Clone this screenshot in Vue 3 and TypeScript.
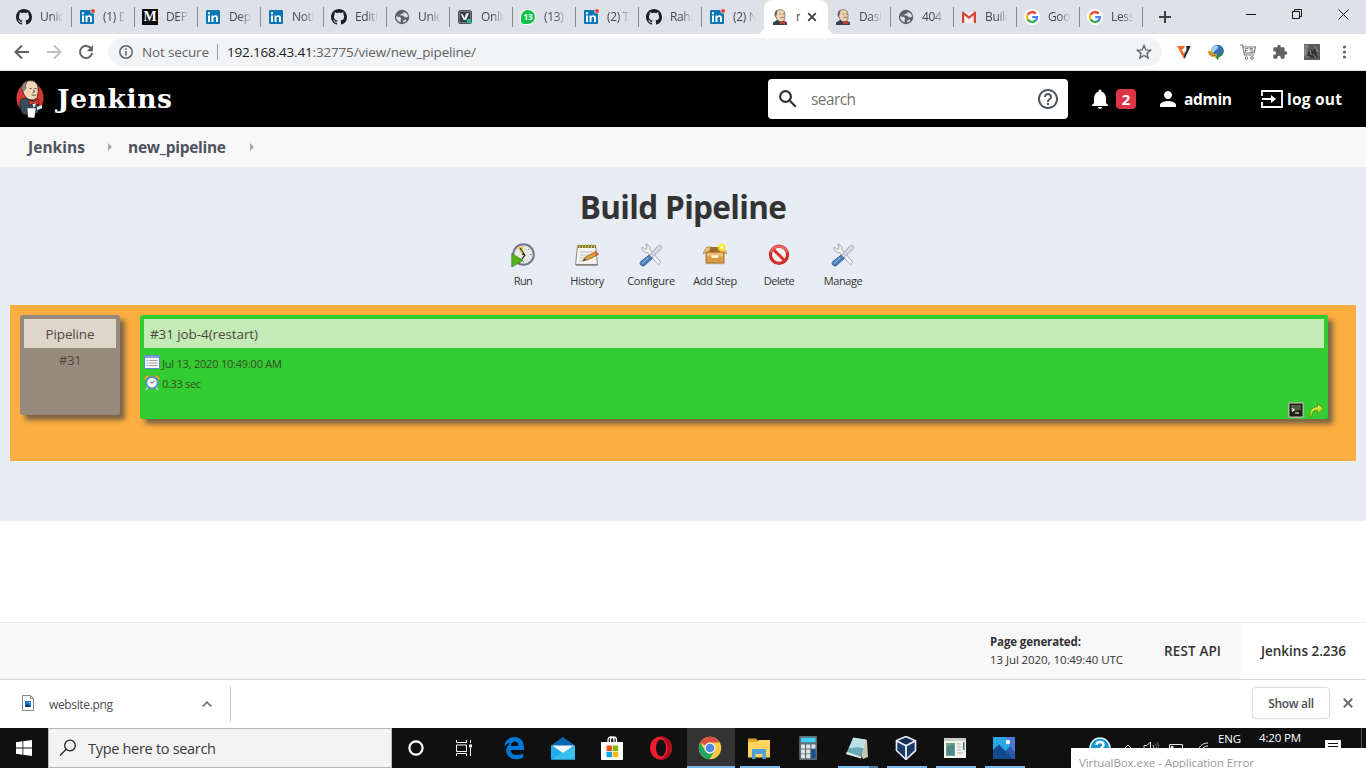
<script setup lang="ts">
import type { Directive } from 'vue'

interface Tab { icon: string; title: string; active?: boolean; plain?: boolean }
interface Action { icon: string; label: string; width: number }
interface TaskApp { icon: string; running?: boolean; focused?: boolean; stacked?: boolean }

const tabs: Tab[] = [
  { icon: 'github', title: 'Unico' },
  { icon: 'linkedin-dot', title: '(1) De' },
  { icon: 'medium', title: 'DEPL' },
  { icon: 'linkedin', title: 'Deplo' },
  { icon: 'linkedin', title: 'Notifi' },
  { icon: 'github', title: 'Editin' },
  { icon: 'globe', title: 'Unico' },
  { icon: 'onlinetool', title: 'Onlin' },
  { icon: 'whatsapp', title: '(13)' },
  { icon: 'linkedin-dot', title: '(2) Ta' },
  { icon: 'github', title: 'Rahul' },
  { icon: 'linkedin-dot', title: '(2) Ne', plain: true },
  { icon: 'butler-head', title: 'n', active: true },
  { icon: 'butler-head', title: 'Dashb' },
  { icon: 'globe', title: '404' },
  { icon: 'gmail', title: 'Build' },
  { icon: 'google', title: 'Goog' },
  { icon: 'google', title: 'Less' },
]

const actions: Action[] = [
  { icon: 'run', label: 'Run', width: 19 },
  { icon: 'history', label: 'History', width: 34 },
  { icon: 'tools', label: 'Configure', width: 48 },
  { icon: 'package', label: 'Add Step', width: 44 },
  { icon: 'forbid', label: 'Delete', width: 31 },
  { icon: 'tools', label: 'Manage', width: 39 },
]

const apps: TaskApp[] = [
  { icon: 'edge' },
  { icon: 'mail' },
  { icon: 'store' },
  { icon: 'opera' },
  { icon: 'chrome', running: true, focused: true },
  { icon: 'explorer', running: true },
  { icon: 'calc' },
  { icon: 'notepad', running: true, stacked: true },
  { icon: 'vbox', running: true },
  { icon: 'window', running: true },
  { icon: 'photos', running: true },
]

// Spreads the letters of a label so that it takes up the given width.
const vFit: Directive<HTMLElement, number> = {
  mounted(el, { value }) {
    const count = (el.textContent ?? '').trim().length
    const range = document.createRange()
    range.selectNodeContents(el)
    const natural = range.getBoundingClientRect().width
    if (count > 1) el.style.letterSpacing = `${(value - natural) / (count - 1)}px`
  },
}
</script>

<template>
  <svg class="defs" aria-hidden="true">
    <symbol id="github" viewBox="0 0 16 16">
      <path fill="#1b1f23" d="M8 0C3.58 0 0 3.58 0 8c0 3.54 2.29 6.53 5.47 7.59.4.07.55-.17.55-.38 0-.19-.01-.82-.01-1.49-2.01.37-2.53-.49-2.69-.94-.09-.23-.48-.94-.82-1.13-.28-.15-.68-.52-.01-.53.63-.01 1.08.58 1.23.82.72 1.21 1.87.87 2.33.66.07-.52.28-.87.51-1.07-1.78-.2-3.64-.89-3.64-3.95 0-.87.31-1.59.82-2.15-.08-.2-.36-1.02.08-2.12 0 0 .67-.21 2.2.82.64-.18 1.32-.27 2-.27s1.36.09 2 .27c1.53-1.04 2.2-.82 2.2-.82.44 1.1.16 1.92.08 2.12.51.56.82 1.27.82 2.15 0 3.07-1.87 3.75-3.65 3.95.29.25.54.73.54 1.48 0 1.07-.01 1.93-.01 2.2 0 .21.15.46.55.38A8 8 0 0 0 16 8c0-4.42-3.58-8-8-8z" />
    </symbol>
    <symbol id="linkedin" viewBox="0 0 16 16">
      <rect x="1" y="1" width="14" height="14" rx="1" fill="#0a76b5" />
      <path fill="#fff" d="M3 6.4h2V13H3zM3 3.2h2v2H3zM6.5 6.4h1.9v.9c.9-1.4 4.6-1.6 4.6 1.6V13h-2V9.4c0-1.9-2.5-1.7-2.5 0V13h-2z" />
    </symbol>
    <symbol id="linkedin-dot" viewBox="0 0 16 16">
      <use href="#linkedin" />
      <circle cx="14" cy="2" r="2.6" fill="#dee1e6" /><circle cx="14" cy="2" r="2" fill="#f44336" />
    </symbol>
    <symbol id="globe" viewBox="0 0 16 16">
      <circle cx="8" cy="8" r="7.2" fill="#5f6368" />
      <path fill="#dee1e6" d="M2.2 7.2l3.400.9 1.700 1.500-.7 1.600v2C4 12.800 2 10.500 2.200 7.200zM9.800 3.200L8.800 4.600l-2 .6-.6 1.200 3.200.2 1.300 1.600 2 .3 1.400-1.300C13.700 5.200 12.300 3.700 9.800 3.200z" />
      <path fill="#dee1e6" d="M9 12l2-1.500 1.500.2C11.600 12.500 10.500 13.200 9.300 13.600z" />
    </symbol>
    <symbol id="onlinetool" viewBox="0 0 16 16">
      <rect x="1" y="1" width="14" height="14" rx="3" fill="#343d47" />
      <rect x="2.200" y="2.200" width="11.600" height="11.600" rx="2" fill="none" stroke="#9aa3aa" stroke-width=".8" />
      <path d="M3.500 4.500l2.500 1 1.500 3.500 1.500-4.500 3-.5-2.800 7H6.500z" fill="#e9edef" />
      <circle cx="12" cy="12" r="2.300" fill="#1dbf9c" />
    </symbol>
    <symbol id="butler-head" viewBox="0 0 16 16">
      <path fill="#33414d" d="M1 16v-2.500L5 11h6l4 2.500V16z" />
      <path fill="#efd2ae" stroke="#5a5047" stroke-width=".7" d="M3.500 3C5 .3 10.500-.2 12.300 2.700c1 1.800.8 5.800.3 7.800-1 2.500-4.600 3-6.600 1C4 9.500 3 6 3.500 3z" />
      <path d="M2.700 7.500C2 4 3.500 1.500 5.500.9L5 4.500l-1 3.200z" fill="#6e6760" />
      <path d="M7.500 5h1.300M10.800 5h1.300M8.500 8.700c1-.6 2.500-.5 3.300.1" stroke="#5d4c3e" stroke-width=".8" fill="none" />
      <path fill="#d33833" d="M8 12.300l2.500 1 2.800-1v3.400L10.500 14.600 8 15.700z" />
    </symbol>
    <symbol id="gmail" viewBox="0 0 16 16">
      <path fill="#f1f1f1" d="M1 3h14v11H1z" />
      <path fill="#d5433a" d="M1 14V3.200C1 2.600 1.800 2.300 2.400 2.800L8 7.300l5.600-4.500c.6-.5 1.400-.2 1.400.4V14h-2.200V6.200L8 10 3.200 6.200V14z" />
    </symbol>
    <symbol id="google" viewBox="0 0 16 16">
      <circle cx="8" cy="8" r="8" fill="#fff" />
      <g fill="none" stroke-width="2.300">
        <path stroke="#ea4335" d="M11.700 4.600A5 5 0 0 0 3.600 5.700" />
        <path stroke="#fbbc05" d="M3.600 5.600a5 5 0 0 0 0 4.800" />
        <path stroke="#34a853" d="M3.600 10.300a5 5 0 0 0 7.800 1.400" />
        <path stroke="#4285f4" d="M11.300 11.800A5 5 0 0 0 13 8.200H8.200" />
      </g>
    </symbol>

    <symbol id="run" viewBox="0 0 24 24">
      <circle cx="12.500" cy="11.500" r="10.300" fill="#e9e9e4" stroke="#76758f" stroke-width="2" />
      <path d="M11.500 12L6.500 4.500a10 10 0 0 1 5.800-1.500z" fill="#e9cb53" />
      <path d="M9 5l5 7.200-3.500 4.500M14 12l-3-1" stroke="#222" stroke-width="1.100" fill="none" />
      <path d="M20.500 11.500h-1.500M12.500 19.500v-1.300M18 5.800l-1 1" stroke="#7b7b83" stroke-width="1" />
      <path d="M.8 10.500L11.800 17.500.8 24z" fill="#55b31d" stroke="#388611" stroke-width=".8" />
    </symbol>
    <symbol id="history" viewBox="0 0 24 24">
      <path d="M2.500 2.500h18l2 19.500h-22z" fill="#f4f4f0" stroke="#8b8b86" />
      <path d="M1 21.700h21.500" stroke="#7f7f7a" stroke-width="1.500" />
      <path d="M3 2h18v3H3z" fill="#8d7f37" /><path d="M4.500 1v4M7.500 1v4M10.500 1v4M13.500 1v4M16.500 1v4M19.500 1v4" stroke="#c8bb62" stroke-width="1" />
      <path d="M5 9h13M5 12h9M4.500 15h6M4 18h5" stroke="#bdbdb8" stroke-width="1" />
      <path d="M21 8.500l2.500 3-11 5.500-4.500.5 2.500-3.500z" fill="#dc9c3c" stroke="#805a24" stroke-width=".7" />
      <path d="M21 8l2.800 3.200-2 1-2.300-3z" fill="#dd5947" /><path d="M7.500 17.700l2.400-2 1 1.600z" fill="#322b22" />
    </symbol>
    <symbol id="tools" viewBox="0 0 24 24">
      <path d="M3 4.200l3.200 2 1.500-.7.3-3-2-1.200c3-.4 5.300 1.700 5 5.300l10 11.500c1.500 2-1 4-2.700 2.600L8.500 9.500C5.500 10 2.600 7.500 3 4.200z" fill="#f1f1ef" stroke="#999b9d" stroke-width=".9" />
      <path d="M18.500 3.500c1-1 2.500-1.500 3.500-.5s.3 2.500-.7 3.500L10.500 16.500l-2-1.800z" fill="#d3dbe5" stroke="#8696ab" stroke-width=".8" />
      <path d="M10 12.300l3.300 3.200-7.500 6.700c-1.500 1.200-2.900.9-3.900-.1s-1.200-2.400 0-3.700z" fill="#4d7fc0" stroke="#2c568e" stroke-width=".9" />
      <path d="M9.500 14.500l-6.500 6" stroke="#a9c8ed" stroke-width="1" />
    </symbol>
    <symbol id="package" viewBox="0 0 24 24">
      <path d="M2 20h20l1 1.500H2z" fill="#cfccc4" />
      <path d="M3 9h18v11H3z" fill="#dc9b47" stroke="#98631e" stroke-width=".8" />
      <path d="M4 10h16v3.500H4z" fill="#eebf78" /><path d="M3 9l3-5h12l3 5z" fill="#9a6b2c" />
      <path d="M3 9l-2 2-1-1 4-6h4L6 9zM21 9l2 2 1-1-4-5h-3l1 4z" fill="#f0c179" stroke="#a87128" stroke-width=".7" />
      <rect x="8.500" y="12" width="7" height="3" rx="1.500" fill="#fff3d1" />
      <circle cx="18.700" cy="4.500" r="4" fill="#ffe81b" opacity=".85" /><circle cx="18.700" cy="4.500" r="1.700" fill="#fffcb6" />
    </symbol>
    <symbol id="forbid" viewBox="0 0 24 24">
      <circle cx="12" cy="11.800" r="8.600" fill="#f1eeee" stroke="#cf2c2c" stroke-width="3.200" />
      <path d="M6 6l12 12" stroke="#d53030" stroke-width="3" /><path d="M3.900 9a8.700 8.700 0 0 1 16.200 0" fill="none" stroke="#ec6c69" stroke-width="2.200" />
    </symbol>
    <symbol id="report" viewBox="0 0 16 16">
      <rect x=".5" y=".5" width="15" height="13" rx="1" fill="#f5f8fc" stroke="#5d86c4" />
      <path d="M1 1h14v2H1z" fill="#7ba2de" />
      <path d="M2.500 5.500h1.300M2.500 8h1.300M2.500 10.500h1.300" stroke="#32a4cc" stroke-width="1.200" />
      <path d="M5 5.500h8.500M5 8h8.500M5 10.500h8.500" stroke="#a69b92" stroke-width="1" />
    </symbol>
    <symbol id="alarm" viewBox="0 0 16 16">
      <path d="M4 12l-2 3M12 12l2 3" stroke="#bcc6c7" stroke-width="2" />
      <path d="M.5 4.700C0 1.500 3 0 5.700.8zM15.500 4.700C16 1.500 13 0 10.300.8z" fill="#f4bd3c" stroke="#ba8520" stroke-width=".6" />
      <circle cx="8" cy="7.700" r="5.700" fill="#f3f8fb" stroke="#5b91c2" stroke-width="1.800" />
      <path d="M8 8.300l2.500-2.500M8 8.300L6.500 6.500" stroke="#555" fill="none" stroke-width="1" />
    </symbol>
    <symbol id="console" viewBox="0 0 16 16">
      <rect x=".7" y=".7" width="14.600" height="14.600" rx="1.500" fill="#383b24" stroke="#b2b1a1" stroke-width="1.400" />
      <rect x="2" y="2" width="12" height="12" fill="#1d2114" /><path d="M3 3h10v5L3 9z" fill="#565a3a" />
      <path d="M4 6.300l2.200 1.700L4 9.500M7 11h4" stroke="#fff" fill="none" stroke-width="1.100" />
    </symbol>
    <symbol id="redo" viewBox="0 0 16 16">
      <path d="M1.200 14.500C0 9 2.500 5 8.500 4.900V1.500L14.500 6.700 8.500 12V8.500C4.500 8 2.500 10.500 3 14.500z" fill="#b5d92d" stroke="#5f9713" stroke-width=".9" />
      <path d="M2.300 10C3.500 7 6 6 9.500 6V4l3 2.700" fill="none" stroke="#e6ef5a" stroke-width=".8" />
    </symbol>

    <symbol id="edge" viewBox="0 0 24 24">
      <path fill="#0078d7" d="M2 11C3 4 7.500 1 12.500 1 19 1 22.500 6 22 14H8.500c.2 4 4 5.300 7 5 2.200-.1 4-.8 5.700-1.800v4.300C15 25 4.500 23.500 4.200 14.500c0-3.500 2-6.300 4.500-7.500C5.600 7 3.300 8.900 2 11zM8.700 10h7.600c.2-3.500-1.600-4.500-3.500-4.500S9 7 8.700 10z" />
    </symbol>
    <symbol id="mail" viewBox="0 0 24 24">
      <path fill="#0867b2" d="M0 9.500L12 1l12 8.500V14H0z" /><path fill="#22adeb" d="M0 9.500L24 22v1.500H0z" />
      <path fill="#39c0f2" d="M24 9.500L0 23.500h24z" /><path fill="#f4fafd" d="M1 9.500h22L12 17z" />
    </symbol>
    <symbol id="store" viewBox="0 0 24 24">
      <path fill="none" stroke="#fff" stroke-width="1.300" d="M8 7V4c0-4 6-4 6 0v3M10.500 6V4c0-4 6-4 6 0v3" />
      <path fill="#fff" d="M1 6h22v17a1 1 0 0 1-1 1H2a1 1 0 0 1-1-1z" />
      <path fill="#f25022" d="M6.500 9.500H12V15H6.500z" /><path fill="#7fba00" d="M12.700 9.500h5.500V15h-5.500z" />
      <path fill="#00a4ef" d="M6.500 15.700H12v5.500H6.500z" /><path fill="#ffb900" d="M12.700 15.700h5.500v5.500h-5.500z" />
    </symbol>
    <symbol id="opera" viewBox="0 0 24 24">
      <ellipse cx="12" cy="12" rx="11" ry="11.500" fill="#ed1c2e" />
      <path d="M12 .5a11 11.500 0 0 1 0 23c5-3 7-8 6.500-12S16 3 12 .5z" fill="#ae0d22" />
      <ellipse cx="12" cy="12" rx="5" ry="8.500" fill="#111" />
    </symbol>
    <symbol id="chrome" viewBox="0 0 24 24">
      <circle cx="12" cy="12" r="11.200" fill="#ffcd41" />
      <path d="M2.300 6.400A11.200 11.200 0 0 1 21.700 6.400H12a5.600 5.600 0 0 0-5 3z" fill="#dc4f40" />
      <path d="M2.300 6.400a11.200 11.200 0 0 0 9 16.800L16.800 15 12 17.600a5.600 5.600 0 0 1-4.900-2.800z" fill="#20a566" />
      <circle cx="12" cy="12" r="5.500" fill="#f3f3f3" /><circle cx="12" cy="12" r="4.300" fill="#4b89ed" />
    </symbol>
    <symbol id="explorer" viewBox="0 0 24 24">
      <path d="M1 2.500h8l1.500 2H23V21H1z" fill="#dda52a" /><path d="M1 6h9l2-2h11v17.500H1z" fill="#ffd35d" />
      <path d="M5 23v-9a1 1 0 0 1 1-1h12a1 1 0 0 1 1 1v9h-3.500v-5h-7v5z" fill="#4aa1db" />
    </symbol>
    <symbol id="calc" viewBox="0 0 24 24">
      <rect x="3.200" width="17.800" height="24" rx="1" fill="#606d78" /><path d="M5 1.700h14.500v4.600H5z" fill="#3cd2f4" />
      <g fill="#dde3e8"><path d="M5 8.500h4v4H5zM10.200 8.500h4v4h-4zM15.400 8.500h4v4h-4zM5 13.400h4v4H5zM10.200 13.400h4v4h-4zM5 18.300h4v4H5zM10.200 18.300h4v4h-4z" /></g>
      <path d="M15.400 13.400h4v9h-4z" fill="#154f93" />
    </symbol>
    <symbol id="notepad" viewBox="0 0 24 24">
      <path d="M9 3l13 1 1 17-5 2z" fill="#c9c7b1" /><path d="M8 2l13 2-5 18L1 18z" fill="#69a9b4" />
      <path d="M8.200 2L21 4l-2.200 8.500C13 10 9 12 4 12z" fill="#bbe3e5" /><path d="M8 2l13 2" stroke="#d9e4e2" stroke-width="1.200" />
      <path d="M1 18l15 4.500.5-1.500-14.500-5z" fill="#e9f0ec" />
    </symbol>
    <symbol id="vbox" viewBox="0 0 24 24">
      <path d="M12 .5l9.500 4.200v10L12 23.500l-9.500-9v-10z" fill="#1c3a66" stroke="#dde6f2" stroke-width="1.700" />
      <path d="M3 5l9 4.700L21 5M12 9.700V22" stroke="#eef3fa" stroke-width="1.800" fill="none" />
      <path d="M5.500 5L12 2l6.500 3L12 8z" fill="#162c50" />
    </symbol>
    <symbol id="window" viewBox="0 0 24 24">
      <path d="M1 2h22v20H1z" fill="#f3f3f0" /><path d="M1 2h22v3H1z" fill="#c9cbca" />
      <path d="M3 7h9v13H3z" fill="#6f9f85" /><path d="M4 11l7-3v11H4z" fill="#4b878f" />
      <path d="M14 8h4M14 11h4M14 14h4M14 17h6" stroke="#c7c7c2" stroke-width="1.500" /><path d="M20 6h1.500v8H20z" fill="#297a61" />
    </symbol>
    <symbol id="photos" viewBox="0 0 24 24">
      <path d="M1 1h22v22H1z" fill="#2aa7e9" /><path d="M14 1h9v21z" fill="#4b78d8" />
      <path d="M12 17l6-7 5 6v7H12z" fill="#2c59ac" /><path d="M1 14l6-5.500L21 23H1z" fill="#104a89" />
      <circle cx="16" cy="6" r="2.200" fill="#f4f8fc" />
    </symbol>
  </svg>

  <div class="screen">
    <div class="tabstrip">
      <div v-for="(tab, i) in tabs" :key="i" class="tab" :class="{ active: tab.active, plain: tab.plain || tab.active }">
        <span v-if="tab.icon === 'medium'" class="favicon medium">M</span>
        <span v-else-if="tab.icon === 'whatsapp'" class="favicon whatsapp">13</span>
        <svg v-else class="favicon"><use :href="'#' + tab.icon" /></svg>
        <span class="tab-title">{{ tab.title }}</span>
        <svg v-if="tab.active" class="tab-close" viewBox="0 0 10 10"><path d="M1.200 1.200l7.600 7.600M8.800 1.200L1.200 8.800" /></svg>
      </div>
      <svg class="new-tab" viewBox="0 0 12 12"><path d="M6 0v12M0 6h12" /></svg>
      <div class="controls">
        <svg viewBox="0 0 11 11"><path d="M0 5.500h10" /></svg>
        <svg viewBox="0 0 11 11"><path d="M.5 2.500h7v7h-7zM2.500 2.500v-2h7v7h-2" /></svg>
        <svg viewBox="0 0 11 11"><path d="M.5.5l10 10M10.500.5l-10 10" /></svg>
      </div>
    </div>

    <div class="toolbar">
      <svg class="nav" viewBox="0 0 16 16"><path d="M15 8H2M8 1.500L1.500 8 8 14.500" /></svg>
      <svg class="nav dim" viewBox="0 0 16 16"><path d="M1 8h13M8 1.500L14.500 8 8 14.500" /></svg>
      <svg class="nav" viewBox="0 0 16 16"><path d="M13.300 4.800A6.100 6.100 0 1 0 14.100 9" /><path class="solid" d="M14.900 1v6.200H8.800z" /></svg>
      <div class="omnibox">
        <svg class="info" viewBox="0 0 14 14"><circle cx="7" cy="7" r="6.200" /><path d="M7 6v4.500M7 3.300v1.600" /></svg>
        <span v-fit="67" class="insecure">Not secure</span>
        <span class="bar" />
        <span v-fit="249" class="url"><b>192.168.43.41</b>:32775/view/new_pipeline/</span>
        <svg class="star" viewBox="0 0 16 16"><path d="M8 1.600l1.800 4.300 4.700.4L11 9.400l1.100 4.600L8 11.500 3.900 14 5 9.400 1.500 6.300l4.700-.4z" /></svg>
      </div>
      <div class="extensions">
        <svg viewBox="0 0 16 16"><path d="M1 2h8L7.500 5H5.700l2 4.500L9 7l1 4.500L8 15z" fill="#f46b28" /><path d="M10.200 2h4.500L8.500 15 8 12l2.500-6z" fill="#18233d" /></svg>
        <svg viewBox="0 0 16 16"><circle cx="9.500" cy="7" r="6.300" fill="#3a6fbc" /><path d="M5 3c3-3 6-1 5 1s-3 2-4 4-3 0-3-2z" fill="#a6cfef" /><path d="M0 8l6 1 3 3 7-5-2 4-3 .5L10 16l-3-3c-4 0-6-2-7-5z" fill="#278e24" /><path d="M0 7c2-1.500 4 0 5 2.500l4 1-1 2.500C3 13.500.5 11 0 7z" fill="#e9b42c" /><path d="M1.500 8c1.500 3 3 3.500 6 3.500" stroke="#b5442c" fill="none" /></svg>
        <svg viewBox="0 0 16 16"><path d="M0 1h2.500l2 10H14M3 3h12.500l-1.300 6H4.500" fill="none" stroke="#777" stroke-width="1.100" /><path d="M5.500 4.500h3m-3 0v4m0-2h2M13 4.500h-3v1.500h3v2h-3" fill="none" stroke="#777" stroke-width=".9" /><circle cx="6.500" cy="14" r="1.300" fill="none" stroke="#777" /><circle cx="12" cy="14" r="1.300" fill="none" stroke="#777" /></svg>
        <svg viewBox="0 0 24 24"><path fill="#5f6368" d="M20.500 11H19V7c0-1.100-.9-2-2-2h-4V3.500a2.500 2.500 0 0 0-5 0V5H4c-1.100 0-2 .9-2 2v3.800h1.500a2.700 2.700 0 0 1 0 5.400H2V20c0 1.100.9 2 2 2h3.800v-1.500a2.700 2.700 0 0 1 5.400 0V22H17c1.100 0 2-.9 2-2v-4h1.500a2.500 2.500 0 0 0 0-5z" /></svg>
        <svg viewBox="0 0 16 16"><path d="M0 0h16v16H0z" fill="#5d5d5d" /><path d="M0 1h5l-2 5 1 3-4 4z" fill="#858585" /><path d="M4 8l2.500-3 2 2 2.500-3 3 10H3z" fill="#333" /><path d="M6 6l1 5M11 3l3 5M2 13h4M9 10l3 4" stroke="#999" /></svg>
        <svg viewBox="0 0 16 16"><g fill="#5f6368"><circle cx="8.500" cy="3" r="1.600" /><circle cx="8.500" cy="8" r="1.600" /><circle cx="8.500" cy="13" r="1.600" /></g></svg>
      </div>
    </div>

    <header class="header">
      <svg class="butler" viewBox="0 0 28 40">
        <ellipse cx="14" cy="19" rx="13.500" ry="15.500" fill="#d33833" />
        <path d="M5.500 20l6-1 8 4 4 5-1.500 6-8 2.500-7-1.500C3.500 31 3 24 5.500 20z" fill="#335061" stroke="#151515" stroke-width=".7" />
        <path d="M6.500 7C9 0 19 0 21.500 6c1 4 1 8.500-.5 12.500-2 3-7 3-9.500 1C8 17 5.500 11 6.500 7z" fill="#f0d6b7" stroke="#111" stroke-width=".7" />
        <path d="M6 12C4.500 7 7.500 3 11.500 1.800L9.500 6l.5 3-2.500 3z" fill="#8d8a86" stroke="#222" stroke-width=".5" />
        <path d="M13.500 9.500h2M18.500 9.500h2M15.500 15.700c2 1 4 .5 5-.3M17.500 10.500l1 2.500-2 .5" stroke="#3b2e25" fill="none" stroke-width=".8" />
        <path d="M12.500 20.500l5 2 5-2.500.5 6-5-1.500-5 2z" fill="#d33833" stroke="#111" stroke-width=".5" /><path d="M16.500 25l1.500 4 2-4.500z" fill="#fff" />
        <path d="M11 29h9l-1.500 10-6.500-.5z" fill="#fff" stroke="#222" stroke-width=".4" /><path d="M21 28l5-2v3.500l-5 1.500z" fill="#dfe4e6" />
      </svg>
      <span v-fit="115" class="wordmark">Jenkins</span>
      <div class="search">
        <svg class="lens" viewBox="0 0 18 18"><circle cx="6.500" cy="6.500" r="5.400" /><path d="M10.800 10.800l6 6" /></svg>
        <span v-fit="45" class="placeholder">search</span>
        <svg class="help" viewBox="0 0 24 24"><path d="M11 18h2v-2h-2v2zm1-16C6.480 2 2 6.480 2 12s4.480 10 10 10 10-4.480 10-10S17.520 2 12 2zm0 18c-4.410 0-8-3.590-8-8s3.590-8 8-8 8 3.590 8 8-3.590 8-8 8zm0-14c-2.210 0-4 1.790-4 4h2c0-1.100.9-2 2-2s2 .9 2 2c0 2-3 1.750-3 5h2c0-2.250 3-2.500 3-5 0-2.210-1.790-4-4-4z" /></svg>
      </div>
      <svg class="hicon bell" viewBox="0 0 24 24"><path d="M12 22c1.100 0 2-.9 2-2h-4c0 1.100.9 2 2 2zm6-6v-5c0-3.070-1.630-5.640-4.500-6.320V4a1.500 1.500 0 0 0-3 0v.68C7.640 5.360 6 7.920 6 11v5l-2 2v1h16v-1l-2-2z" /></svg>
      <span class="count">2</span>
      <svg class="hicon user" viewBox="0 0 24 24"><path d="M12 12c2.210 0 4-1.790 4-4s-1.790-4-4-4-4 1.790-4 4 1.790 4 4 4zm0 2c-2.670 0-8 1.340-8 4v2h16v-2c0-2.660-5.330-4-8-4z" /></svg>
      <span v-fit="48" class="hlink">admin</span>
      <svg class="exit" viewBox="0 0 22 18"><path d="M1 6V1h20v16H1v-5M1 9h11" /><path class="tip" d="M10 5l5 4-5 4z" /></svg>
      <span v-fit="55" class="hlink">log out</span>
    </header>

    <nav class="crumbs">
      <span v-fit="57" class="crumb-root">Jenkins</span><i class="arrow first" />
      <span v-fit="98" class="crumb-view">new_pipeline</span><i class="arrow" />
    </nav>

    <main class="content">
      <h1><span v-fit="207">Build Pipeline</span></h1>
      <div class="actions">
        <div v-for="action in actions" :key="action.label" class="action">
          <svg><use :href="'#' + action.icon" /></svg>
          <span v-fit="action.width">{{ action.label }}</span>
        </div>
      </div>
      <section class="pipeline">
        <div class="card revision">
          <div class="card-head"><span v-fit="49">Pipeline</span></div>
          <span v-fit="23" class="number">#31</span>
        </div>
        <div class="card build">
          <div class="card-head"><span v-fit="108">#31 job-4(restart)</span></div>
          <div class="fact"><svg><use href="#report" /></svg><span v-fit="120">Jul 13, 2020 10:49:00 AM</span></div>
          <div class="fact"><svg><use href="#alarm" /></svg><span v-fit="39">0.33 sec</span></div>
          <div class="card-tools"><svg><use href="#console" /></svg><svg><use href="#redo" /></svg></div>
        </div>
      </section>
    </main>

    <footer class="footer">
      <div class="generated"><b v-fit="91">Page generated:</b><span v-fit="133">13 Jul 2020, 10:49:40 UTC</span></div>
      <span v-fit="57" class="rest">REST API</span>
      <div class="version"><span v-fit="85">Jenkins 2.236</span></div>
    </footer>

    <div class="downloads">
      <svg class="file" viewBox="0 0 12 16"><path d="M.5.500h8l3 3v12H.5z" fill="#fff" stroke="#8a8a8a" /><path d="M8.500.500v3h3" fill="none" stroke="#8a8a8a" /><path d="M3 6h6v6H3z" fill="#1d79c9" /><path d="M3 11l2-2 4 3H3z" fill="#0d3768" /><circle cx="7.500" cy="7.500" r=".8" fill="#9ed7ff" /></svg>
      <span v-fit="64" class="filename">website.png</span>
      <svg class="caret" viewBox="0 0 10 6"><path d="M.8 5.300L5 1.200l4.200 4.100" /></svg>
      <span class="split" />
      <div class="show-all"><span v-fit="46">Show all</span></div>
      <svg class="dismiss" viewBox="0 0 10 10"><path d="M.8.8l8.400 8.400M9.200.8L.8 9.200" /></svg>
    </div>

    <div class="taskbar">
      <div class="start"><svg viewBox="0 0 16 16"><path d="M0 2.200L6.500 1.300v6.200H0zM7.300 1.200L16 0v7.500H7.300zM0 8.400h6.500v6.300L0 13.800zM7.300 8.400H16V16l-8.700-1.200z" /></svg></div>
      <div class="task-search">
        <svg viewBox="0 0 18 18"><circle cx="11" cy="6.500" r="5.300" /><path d="M7.200 10.200L1 16.500" /></svg>
        <span v-fit="128">Type here to search</span>
      </div>
      <div class="slot"><svg class="cortana" viewBox="0 0 16 16"><circle cx="8" cy="8" r="6.600" /></svg></div>
      <div class="slot"><svg class="taskview" viewBox="0 0 17 16"><path d="M.5 0v2.500h10V0M.5 5h10v6.500H.5zM.5 16v-2.500h10V16M14.500 0v3M14.500 8v8" /><path class="fill" d="M13 4.500h3v3h-3z" /></svg></div>
      <div class="apps">
        <div v-for="app in apps" :key="app.icon" class="app" :class="{ running: app.running, focused: app.focused, stacked: app.stacked }">
          <svg><use :href="'#' + app.icon" /></svg>
        </div>
      </div>
      <div class="tray">
        <svg class="ask" viewBox="0 0 22 22"><circle cx="11" cy="11" r="10" fill="#1595cf" stroke="#e5f6fc" stroke-width="1.500" /><path d="M7.500 8c0-4 7-4 7 0 0 2.500-3.500 2.500-3.500 5M11 15v2" fill="none" stroke="#fff" stroke-width="2.500" /></svg>
        <svg class="up" viewBox="0 0 10 10"><path d="M1 7l4-4 4 4" /></svg>
        <svg class="vol" viewBox="0 0 16 16"><path d="M1 5.500h3L7.500 2v12L4 10.500H1zM10 5c1 1.500 1 4.500 0 6" /><path class="faint" d="M12 3.500c2 2.500 2 6.500 0 9M14 2c2.500 3.500 2.500 8.500 0 12" /></svg>
        <svg class="bat" viewBox="0 0 16 12"><path d="M.5 2.500h13v7H.5z" /><path d="M2 4.500h2v4H2z" fill="#ddd" /></svg>
        <svg class="wifi" viewBox="0 0 12 12"><path d="M1 11C1 5 5 1 11 1M4 11c0-4 3-7 7-7M7 11c0-2 2-4 4-4" /></svg>
        <span v-fit="23" class="lang">ENG</span>
        <span v-fit="42" class="clock">4:20 PM</span>
        <svg class="notes" viewBox="0 0 16 16"><path fill="#fff" d="M0 0h16v13h-4v3l-3-3H0z" /><path d="M3 3.500h10M3 6.500h10" stroke="#111" stroke-width="1" /></svg>
        <span class="peek" />
      </div>
      <div class="popup"><span v-fit="175">VirtualBox.exe - Application Error</span></div>
    </div>
  </div>
</template>

<style>
html, body { margin: 0; overflow: hidden; background: #fff; }
</style>

<style scoped>
* { box-sizing: border-box; }
.defs { position: absolute; width: 0; height: 0; }
.screen { width: 1366px; height: 768px; display: flex; flex-direction: column; overflow: hidden; font-family: "Open Sans", "Noto Sans", sans-serif; color: #333; white-space: nowrap; }
.screen svg { flex: none; display: block; }
.screen span, .screen b { flex: none; }

.tabstrip { height: 34px; flex: none; background: #dee1e6; display: flex; align-items: center; padding-left: 8px; }
.tab { width: 63px; height: 34px; flex: none; display: flex; align-items: center; padding-left: 8px; position: relative; }
.tab:not(.plain)::after { content: ""; position: absolute; right: -1px; top: 7px; width: 1px; height: 20px; background: #868a90; }
.favicon { width: 16px; height: 16px; overflow: visible; text-align: center; color: #fff; }
.medium { background: #0b0b0b; font: bold 14px/16px "Liberation Serif", serif; }
.whatsapp { background: #12c24a; border: 1px solid #fff; border-radius: 50% 50% 50% 25%; font: bold 8px/13px "Open Sans", sans-serif; }
.tab-title { width: 23px; margin-left: 8px; overflow: hidden; font-size: 12px; letter-spacing: -.35px; color: #45494d; line-height: 20px; mask-image: linear-gradient(to right, #000 50%, transparent 100%); }
.tab.active { background: #fff; border-radius: 8px 8px 0 0; width: 64px; margin-right: -1px; z-index: 1; }
.tab.active::before { content: ""; position: absolute; left: -8px; right: -8px; bottom: 0; height: 8px; background: radial-gradient(circle at 0 0, transparent 8px, #fff 8.500px) left / 8px 8px no-repeat, radial-gradient(circle at 100% 0, transparent 8px, #fff 8.500px) right / 8px 8px no-repeat; }
.active .tab-title { width: 4px; mask-image: none; }
.tab-close { width: 10px; height: 10px; margin-left: 7px; fill: none; stroke: #3c4043; stroke-width: 1.800; }
.new-tab { width: 12px; height: 12px; margin-left: 17px; stroke: #3c4043; stroke-width: 2; }
.controls { margin-left: auto; margin-right: 17px; display: flex; gap: 35px; padding-bottom: 6px; }
.controls svg { width: 11px; height: 11px; fill: none; stroke: #111; stroke-width: 1; }

.toolbar { height: 37px; flex: none; display: flex; align-items: center; padding-left: 14px; border-bottom: 1px solid #d9dce1; }
.nav { width: 16px; height: 16px; margin-right: 16px; fill: none; stroke: #5f6368; stroke-width: 2; }
.nav .solid { fill: #5f6368; stroke: none; }
.dim { stroke: #bfc1c3; }
.omnibox { width: 1054px; height: 28px; margin-left: -2px; border-radius: 14px; background: #f1f3f4; display: flex; align-items: center; padding: 0 10px 0 11px; font-size: 13.500px; color: #5f6368; }
.info { width: 14px; height: 14px; fill: none; stroke: #5f6368; stroke-width: 1.500; }
.insecure { margin-left: 9px; width: 67px; }
.bar { width: 1px; height: 16px; margin: 0 9px 0 8px; background: #9a9da1; }
.url b { font-weight: 400; color: #202124; }
.star { width: 16px; height: 16px; margin-left: auto; fill: none; stroke: #5f6368; stroke-width: 1.400; }
.extensions { margin-left: 14px; display: flex; gap: 16px; }
.extensions svg { width: 16px; height: 16px; }

.header { height: 56px; flex: none; background: #000; color: #fff; display: flex; align-items: center; padding-left: 16px; }
.butler { width: 28px; height: 40px; }
.wordmark { width: 116px; margin-left: 13px; font: bold 26.500px/40px "DejaVu Serif", serif; }
.search { width: 300px; height: 40px; margin-left: 595px; background: #fff; border-radius: 4px; display: flex; align-items: center; padding: 0 8px 0 11px; }
.lens { width: 18px; height: 18px; fill: none; stroke: #333; stroke-width: 2.200; }
.placeholder { margin-left: 14px; font-size: 15.500px; color: #757575; }
.help { width: 24px; height: 24px; margin-left: auto; fill: #4d545d; }
.hicon { width: 24px; height: 24px; fill: #fff; }
.bell { margin-left: 20px; }
.count { width: 20px; height: 20px; margin-left: 4px; border-radius: 4px; background: #dc3545; font: bold 15px/20px "Open Sans", sans-serif; text-align: center; }
.user { margin-left: 20px; }
.hlink { width: 48px; margin-left: 4px; font-size: 15.500px; font-weight: 700; }
.exit { width: 22px; height: 18px; margin-left: 29px; fill: none; stroke: #fff; stroke-width: 1.800; }
.exit .tip { fill: #fff; stroke: none; }

.crumbs { height: 40px; flex: none; background: #f8f8f8; display: flex; align-items: center; padding-left: 28px; font-size: 15.500px; font-weight: 700; color: #4d545d; }
.crumb-root { width: 57px; }
.crumb-view { width: 98px; }
.arrow { border: 4px solid transparent; border-left-color: #aaa; border-right: 0; margin-left: 24px; }
.arrow.first { margin: 0 16px 0 23px; }

.content { height: 354px; flex: none; background: #e8ecf4; padding: 0 10px; }
h1 { margin: 0; padding-top: 18px; font-size: 31.500px; line-height: 43px; font-weight: 700; text-align: center; color: #333; }
.actions { display: flex; justify-content: center; height: 77px; padding-top: 15px; }
.action { width: 64px; display: flex; flex-direction: column; align-items: center; font-size: 11px; line-height: 16px; color: #333; }
.action svg { width: 24px; height: 24px; margin-bottom: 6px; }
.pipeline { height: 156px; background: #fcae40; padding: 10px; display: flex; gap: 20px; align-items: flex-start; color: #50483c; }
.card { border-radius: 2px; padding: 4px; box-shadow: 5px 5px 5px rgba(68, 68, 68, .7); }
.card-head { height: 29px; display: flex; align-items: center; font-size: 13.500px; }
.revision { width: 100px; height: 100px; background: #978b7e; text-align: center; }
.revision .card-head { background: #dfd6cb; justify-content: center; }
.number { display: inline-block; font-size: 13.500px; line-height: 20px; }
.build { width: 1188px; height: 104px; background: #32cd32; position: relative; }
.build .card-head { background: #c2ebb5; padding-left: 6px; margin-bottom: 5px; }
.fact { height: 20px; display: flex; align-items: center; font-size: 11px; color: #3a4a28; gap: 2px; }
.fact svg { width: 16px; height: 16px; }
.card-tools { position: absolute; right: 3px; bottom: 1px; display: flex; gap: 5px; }
.card-tools svg { width: 16px; height: 16px; }

.footer { height: 57px; flex: none; margin-top: 101px; background: #f8f8f8; border-top: 1px solid #e9ecef; display: flex; align-items: center; justify-content: flex-end; color: #333; }
.generated { display: flex; flex-direction: column; align-items: flex-start; width: 134px; font-size: 11.500px; line-height: 18px; }
.rest { width: 57px; margin: 0 20px 0 40px; font-size: 13.500px; font-weight: 600; }
.version { width: 125px; height: 56px; background: #fff; display: flex; align-items: center; padding-left: 20px; font-size: 13.500px; font-weight: 600; }

.downloads { height: 49px; flex: none; border-top: 1px solid #d5d7da; display: flex; align-items: center; padding-left: 22px; }
.file { width: 12px; height: 16px; margin-bottom: 2px; }
.filename { width: 64px; margin-left: 15px; font-size: 12px; color: #4b4e52; }
.caret { width: 10px; height: 6px; margin-left: 89px; fill: none; stroke: #73777c; stroke-width: 1.800; }
.split { width: 1px; height: 36px; margin-left: 18px; background: #ccc; }
.show-all { width: 78px; height: 32px; margin: 0 0 2px auto; border: 1px solid #dadce0; border-radius: 4px; display: flex; align-items: center; justify-content: center; font-size: 12px; font-weight: 600; color: #4b4e52; }
.dismiss { width: 10px; height: 10px; margin: 0 13px 2px; fill: none; stroke: #6c7074; stroke-width: 2; }

.taskbar { height: 40px; flex: none; background: #101010; position: relative; display: flex; color: #fff; }
.start, .slot { width: 48px; flex: none; display: flex; align-items: center; justify-content: center; }
.start svg { width: 16px; height: 16px; fill: #fff; }
.task-search { width: 344px; flex: none; background: #f3f3f3; border: 1px solid #b9b9b9; display: flex; align-items: center; padding-left: 10px; font-size: 14.500px; color: #3a3a3a; }
.task-search svg { width: 18px; height: 18px; margin-right: 11px; fill: none; stroke: #222; stroke-width: 1.300; }
.cortana { width: 16px; height: 16px; fill: none; stroke: #fff; stroke-width: 2.200; }
.taskview { width: 17px; height: 16px; fill: none; stroke: #fff; }
.taskview .fill { fill: #fff; stroke: none; }
.apps { display: flex; margin-left: 2px; }
.app { width: 49px; padding-right: 1px; display: flex; align-items: center; justify-content: center; position: relative; }
.app svg { width: 24px; height: 24px; }
.app.running::after { content: ""; position: absolute; left: 5px; right: 4px; bottom: 0; height: 2px; background: #76b9ed; }
.app.focused { background: linear-gradient(#333, #333) 1px 0 / 48px 100% no-repeat; }
.app.focused::after { left: 1px; right: 0; }
.app.stacked::after { background: linear-gradient(to right, #76b9ed 31px, #527fa4 31px); }
.tray { margin-left: auto; display: flex; align-items: flex-start; font-size: 11.500px; }
.tray svg { fill: none; stroke: #e6e6e6; }
.ask { width: 22px; height: 22px; margin-top: 9px; }
.up { width: 10px; height: 10px; margin: 14px 0 0 12px; }
.vol { width: 16px; height: 16px; margin: 12px 0 0 10px; }
.vol .faint { stroke: #777; }
.bat { width: 16px; height: 12px; margin: 14px 0 0 10px; }
.wifi { width: 12px; height: 12px; margin: 14px 0 0 12px; }
.lang { width: 23px; margin: 3px 0 0 9px; line-height: 16px; }
.clock { width: 42px; margin: 2px 0 0 18px; line-height: 16px; }
.notes { width: 16px; height: 16px; margin: 12px 20px 0 24px; }
.peek { width: 5px; height: 40px; border-left: 1px solid #555; }
.popup { position: absolute; left: 1071px; top: 20px; width: 295px; height: 20px; background: #fff; color: #999; padding-left: 8px; font-size: 11.500px; line-height: 30px; overflow: hidden; }
</style>
